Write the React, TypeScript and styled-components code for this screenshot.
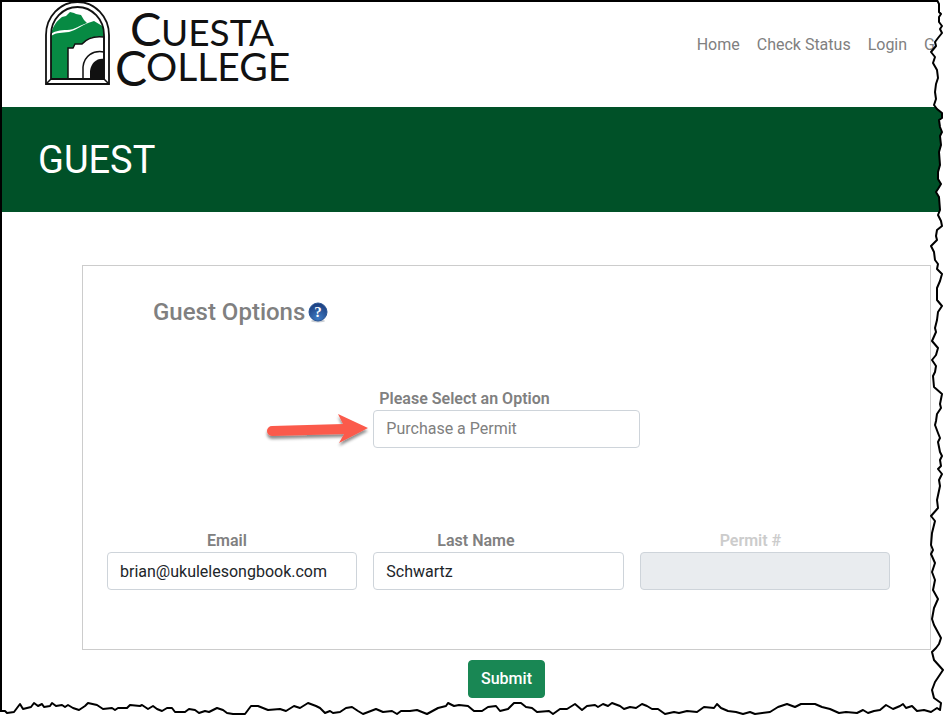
import React, { useState } from 'react';
import styled, { createGlobalStyle } from 'styled-components';

const GlobalStyle = createGlobalStyle`
  *, *::before, *::after { box-sizing: border-box; }
  html, body { margin: 0; background: #fff; overflow: hidden; }
  body {
    font-family: Roboto, Inter, sans-serif;
    font-size: 16px;
    line-height: 24px;
    color: #212529;
  }
`;

const Page = styled.div`
  position: relative;
  min-height: 100vh;
  overflow: hidden;
  border-top: 2px solid #000;
  border-left: 2px solid #000;
`;

const Header = styled.header`
  display: flex;
  align-items: flex-start;
  justify-content: space-between;
  height: 105px;
  padding: 0 9px 0 40px;
`;

const LogoLink = styled.a`
  display: block;
  line-height: 0;
`;

const Nav = styled.nav`
  display: flex;
  gap: 17px;
  padding-top: 31px;
`;

const NavLink = styled.a`
  color: #808080;
  font-size: 16px;
  text-decoration: none;
  white-space: nowrap;
`;

const Banner = styled.div`
  display: flex;
  align-items: center;
  height: 105px;
  padding: 0 36px;
  background: #005128;
`;

const BannerTitle = styled.h1`
  margin: 0;
  color: #fff;
  font-size: 38px;
  font-weight: 400;
  line-height: 48px;
`;

const Form = styled.form`
  display: flex;
  flex-direction: column;
  align-items: center;
  gap: 10px;
  padding: 53px 13px 0 80px;
`;

const Card = styled.section`
  width: 100%;
  padding: 28px 24px 59px;
  border: 1px solid #ccc;
`;

const CardHeading = styled.div`
  display: flex;
  align-items: center;
  gap: 2px;
  padding-left: 46px;
`;

const CardTitle = styled.h2`
  margin: 0;
  color: #808080;
  font-size: 24px;
  font-weight: 500;
  line-height: 36px;
`;

const HelpButton = styled.button`
  padding: 0;
  border: 0;
  background: none;
  line-height: 0;
  cursor: pointer;
`;

const FieldRow = styled.div<{ $space: number }>`
  display: grid;
  grid-template-columns: repeat(3, 1fr);
  margin-top: ${p => p.$space}px;
`;

const Field = styled.div<{ $column?: number; $wide?: boolean }>`
  display: flex;
  flex-direction: column;
  grid-column: ${p => p.$column ?? 'auto'};
  padding-right: ${p => (p.$wide ? 0 : 16)}px;
`;

const Label = styled.label<{ $indent: number; $muted?: boolean }>`
  padding-left: ${p => p.$indent}px;
  color: ${p => (p.$muted ? '#ccc' : '#808080')};
  font-size: 16px;
  font-weight: 600;
  line-height: 22px;
`;

const Input = styled.input`
  width: 100%;
  height: 38px;
  padding: 0 12px;
  border: 1px solid #ced4da;
  border-radius: 4px;
  background: #fff;
  color: #212529;
  font: inherit;
  font-size: 16px;
  &:disabled { background: #e9ecef; }
`;

const Select = styled.select`
  width: 100%;
  height: 38px;
  padding: 0 12px;
  border: 1px solid #ced4da;
  border-radius: 4px;
  background: #fff;
  color: #808080;
  font: inherit;
  font-size: 16px;
  appearance: none;
`;

const SubmitButton = styled.button`
  height: 38px;
  padding: 0 12px;
  border: 1px solid #198754;
  border-radius: 4px;
  background: #198754;
  color: #fff;
  font: inherit;
  font-weight: 500;
  font-size: 16px;
  cursor: pointer;
`;

const SelectWrap = styled.div`
  position: relative;
`;

const Arrow = styled.svg`
  position: absolute;
  right: 100%;
  top: 50%;
  width: 112px;
  height: 44px;
  transform: translateY(-50%);
  overflow: visible;
  pointer-events: none;
`;

const EdgeOverlay = styled.svg`
  position: fixed;
  inset: 0;
  width: 100%;
  height: 100%;
  pointer-events: none;
`;

const rightEdge =
  '937,0 939,4 939,12 941,14 939,17 939,22 942,26 940,29 942,33 938,38 935,42 936,46 931,52 935,57 933,63 937,70 938,78 936,84 935,92 936,99 934,105 937,109 942,113 942,118 939,120 940,127 942,132 940,136 941,145 939,152 940,165 938,172 938,179 941,184 938,189 936,192 939,197 940,210 938,215 941,221 942,226 937,230 936,236 937,240 931,246 934,252 935,260 938,264 937,269 942,274 940,281 937,288 937,300 942,306 938,312 937,320 935,328 936,332 932,341 938,348 936,355 932,360 936,366 935,372 933,376 934,387 942,394 940,404 941,408 937,414 936,421 935,425 938,433 940,438 938,442 940,452 942,456 940,460 941,466 938,469 942,474 939,480 940,486 937,500 938,508 931,516 935,521 932,533 931,545 933,550 931,554 935,563 932,572 935,580 933,590 938,599 934,608 932,619 934,625 941,638 939,644 936,648 932,652 934,660 943,670 935,682 932,690 934,698 941,703 940,710';

const bottomEdge =
  '937,708 931,712 924,710 917,711 912,706 906,708 903,704 900,706 893,709 886,705 880,710 874,711 868,713 863,710 857,713 846,712 839,713 830,709 822,707 815,704 801,704 795,707 787,704 778,707 770,712 755,714 750,712 743,714 736,712 728,711 721,708 717,704 714,708 704,707 697,712 687,711 679,713 674,712 665,714 658,709 652,709 647,706 642,704 636,708 630,707 624,709 620,706 612,703 608,706 603,704 598,707 595,705 587,706 582,710 575,704 567,709 560,709 553,714 549,711 537,712 532,708 526,707 521,703 514,703 508,709 500,711 496,706 488,707 482,711 474,711 468,706 459,705 454,706 448,703 446,706 438,708 427,714 417,710 410,711 401,711 397,714 392,711 383,712 376,709 363,714 358,711 352,707 346,708 340,712 333,713 330,711 325,713 320,708 316,706 308,703 300,708 294,706 286,711 280,709 268,710 258,706 251,706 245,714 233,714 227,713 223,710 217,708 209,712 205,711 199,713 195,710 189,709 185,712 175,712 172,708 167,708 162,711 157,709 153,706 148,709 142,705 140,706 130,705 127,708 118,708 115,710 112,708 103,709 97,705 88,703 85,706 79,710 73,708 68,705 65,707 62,705 56,706 52,703 50,706 44,707 42,704 38,706 34,703 31,707 23,709 20,704 14,712 7,713 5,711 0,711';

function TornEdge() {
  return (
    <EdgeOverlay viewBox="0 0 944 716" preserveAspectRatio="none" aria-hidden="true">
      <polygon points={`${rightEdge} ${bottomEdge} 0,716 944,716 944,0`} fill="#fff" />
      <polyline
        points={`${rightEdge} ${bottomEdge}`}
        fill="none"
        stroke="#000"
        strokeWidth="2"
        strokeLinejoin="round"
        vectorEffect="non-scaling-stroke"
      />
    </EdgeOverlay>
  );
}

function Logo() {
  return (
    <svg width="252" height="90" viewBox="42 2 252 90" role="img" aria-label="Cuesta College">
      <path d="M46 84V35A31.500 33 0 0 1 109 35V84Z" fill="#fff" stroke="#111" strokeWidth="1.800" />
      <path d="M51 79V35A26.500 28 0 0 1 104 35V79Z" fill="#fff" />
      <path d="M51 34C53 25 58 20 62 17L66 16L70 12L74 13L76 14L81 15L84 20L87 23C80 25 75 30 67 30C60 30 55 31 51 34Z" fill="#078a43" />
      <path d="M51 36C57 32 62 33 69 32C77 30 82 25 88 23L94 21L104 27V37C97 36 92 38 88 40L84 44H78L75 48H68V79H51Z" fill="#078a43" />
      <path d="M68 79V48L73 48L75 44L82 44C88 37 96 36 104 37V79Z" fill="#fff" stroke="#111" strokeWidth="1.500" />
      <path d="M83 79V67C84 56 93 50 104 52" fill="none" stroke="#111" strokeWidth="1.500" />
      <path d="M90 79V71C91 63 97 58 104 59V79Z" fill="#111" />
      <path d="M51 79V35A26.500 28 0 0 1 104 35V79Z" fill="none" stroke="#111" strokeWidth="1.800" />
      <path d="M46 84L51 79M109 84L104 79" stroke="#111" strokeWidth="1.500" />
      <g fill="#111" fontFamily="Lato, sans-serif">
        <text x="130" y="46" fontSize="47">C</text>
        <text x="161" y="46" fontSize="37">UESTA</text>
        <text x="115" y="86" fontSize="48">C</text>
        <text x="146" y="81" fontSize="39">OLLEGE</text>
      </g>
    </svg>
  );
}

function HelpIcon() {
  return (
    <svg width="22" height="22" viewBox="0 0 22 22" aria-hidden="true">
      <defs>
        <radialGradient id="help-fill" cx="50%" cy="85%" r="80%">
          <stop offset="0" stopColor="#3f7cc4" />
          <stop offset="1" stopColor="#1c3f80" />
        </radialGradient>
      </defs>
      <ellipse cx="11" cy="20" rx="7" ry="1.500" fill="#c8ccd2" />
      <circle cx="11" cy="11" r="9" fill="url(#help-fill)" stroke="#2b5797" />
      <text x="11" y="16" textAnchor="middle" fontFamily="Liberation Serif, serif" fontWeight="700" fontSize="15" fill="#fff">?</text>
    </svg>
  );
}

function PointerArrow() {
  return (
    <Arrow viewBox="261 407 112 44" aria-hidden="true">
      <defs>
        <filter id="arrow-shadow" x="-10%" y="-20%" width="120%" height="160%">
          <feDropShadow dx="0" dy="3" stdDeviation="1.500" floodColor="#000" floodOpacity="0.450" />
        </filter>
      </defs>
      <path
        d="M272 426L343 424L338 414L368 428L339 443L344 434L272 436A5 5 0 0 1 272 426Z"
        fill="#fb5a4b"
        filter="url(#arrow-shadow)"
      />
    </Arrow>
  );
}

const navItems = ['Home', 'Check Status', 'Login', 'G'];

export default function App() {
  const [email, setEmail] = useState('brian@ukulelesongbook.com');
  const [lastName, setLastName] = useState('Schwartz');

  return (
    <>
      <GlobalStyle />
      <Page>
        <Header>
          <LogoLink href="#"><Logo /></LogoLink>
          <Nav>
            {navItems.map(item => (
              <NavLink key={item} href="#">{item}</NavLink>
            ))}
          </Nav>
        </Header>
        <Banner>
          <BannerTitle>GUEST</BannerTitle>
        </Banner>
        <Form onSubmit={e => e.preventDefault()}>
          <Card>
            <CardHeading>
              <CardTitle>Guest Options</CardTitle>
              <HelpButton type="button" aria-label="Help"><HelpIcon /></HelpButton>
            </CardHeading>
            <FieldRow $space={58}>
              <Field $column={2} $wide>
                <Label htmlFor="option" $indent={6}>Please Select an Option</Label>
                <SelectWrap>
                  <Select id="option">
                    <option>Purchase a Permit</option>
                  </Select>
                  <PointerArrow />
                </SelectWrap>
              </Field>
            </FieldRow>
            <FieldRow $space={82}>
              <Field>
                <Label htmlFor="email" $indent={100}>Email</Label>
                <Input id="email" type="email" value={email} onChange={e => setEmail(e.target.value)} />
              </Field>
              <Field>
                <Label htmlFor="last-name" $indent={64}>Last Name</Label>
                <Input id="last-name" value={lastName} onChange={e => setLastName(e.target.value)} />
              </Field>
              <Field>
                <Label htmlFor="permit" $indent={80} $muted>Permit #</Label>
                <Input id="permit" disabled />
              </Field>
            </FieldRow>
          </Card>
          <SubmitButton type="submit">Submit</SubmitButton>
        </Form>
      </Page>
      <TornEdge />
    </>
  );
}
